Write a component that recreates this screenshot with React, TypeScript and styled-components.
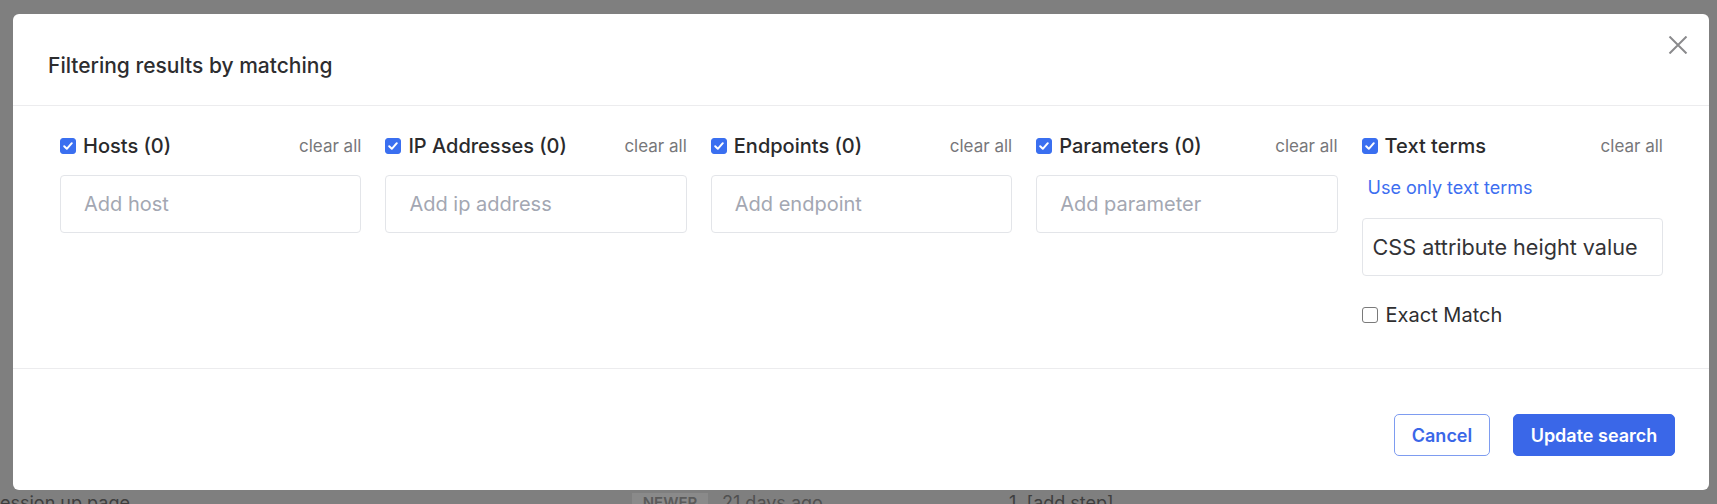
import React from "react";
import styled, { createGlobalStyle } from "styled-components";

const GlobalStyle = createGlobalStyle`
  html, body {
    margin: 0;
    padding: 0;
    background: #7f7f7f;
    font-family: Inter, "Liberation Sans", Arial, sans-serif;
  }
  * { box-sizing: border-box; }
`;

const Backdrop = styled.div`
  width: 1717px;
  height: 504px;
  background: #7f7f7f;
  padding: 14px 8px 0 13px;
  overflow: hidden;
`;

const Modal = styled.div`
  position: relative;
  width: 1696px;
  height: 476px;
  background: #ffffff;
  border-radius: 6px;
  display: flex;
  flex-direction: column;
`;

const Header = styled.div`
  padding: 41px 47px 28px 35px;
  border-bottom: 1px solid #ececee;
`;

const Title = styled.h2`
  margin: 0;
  font-size: 21px;
  line-height: 22px;
  font-weight: 500;
  color: #2d2d2f;
`;

const CloseButton = styled.button`
  position: absolute;
  top: 22px;
  right: 21px;
  width: 20px;
  height: 18px;
  padding: 0;
  border: none;
  background: transparent;
  display: flex;
  align-items: center;
  justify-content: center;
`;

const Body = styled.div`
  display: grid;
  grid-template-columns: repeat(5, 1fr);
  column-gap: 24px;
  padding: 29px 46px 42px 47px;
  border-bottom: 1px solid #ececee;
`;

const Column = styled.div`
  display: flex;
  flex-direction: column;
`;

const ColumnHead = styled.div`
  display: flex;
  align-items: center;
  justify-content: space-between;
  height: 22px;
`;

const CheckLabel = styled.label`
  display: flex;
  align-items: center;
  gap: 7px;
  font-size: 20px;
  line-height: 22px;
  font-weight: 500;
  color: #2a2a2c;
`;

const Box = styled.span<{ $checked?: boolean }>`
  width: 16px;
  height: 16px;
  border-radius: 3px;
  flex: none;
  display: flex;
  align-items: center;
  justify-content: center;
  background: ${(p) => (p.$checked ? "#3a6ff0" : "#ffffff")};
  border: 1px solid ${(p) => (p.$checked ? "#3a6ff0" : "#7a7a7a")};
`;

const ClearAll = styled.span`
  font-size: 17px;
  color: #77777a;
`;

const Field = styled.div<{ $top: number; $filled?: boolean }>`
  margin-top: ${(p) => p.$top}px;
  height: 58px;
  border: 1px solid #e3e5e9;
  border-radius: 4px;
  display: flex;
  align-items: center;
  padding: 0 ${(p) => (p.$filled ? "10px" : "23px")};
  font-size: ${(p) => (p.$filled ? "21.6px" : "20px")};
  color: ${(p) => (p.$filled ? "#333336" : "#a3a7b2")};
  white-space: nowrap;
  overflow: hidden;
`;

const LinkText = styled.a`
  margin-top: 22px;
  padding-left: 6px;
  font-size: 18px;
  line-height: 18px;
  color: #3d6ef0;
  text-decoration: none;
`;

const ExactRow = styled.label`
  margin-top: 28px;
  display: flex;
  align-items: center;
  gap: 8px;
  font-size: 20px;
  line-height: 22px;
  color: #2f2f31;
`;

const Footer = styled.div`
  flex: 1;
  display: flex;
  justify-content: flex-end;
  align-items: flex-start;
  gap: 23px;
  padding: 45px 34px 0 0;
`;

const Button = styled.button<{ $primary?: boolean }>`
  height: 42px;
  padding: 0 16px;
  min-width: ${(p) => (p.$primary ? "162px" : "96px")};
  border-radius: 5px;
  font-family: inherit;
  font-size: 18px;
  font-weight: 600;
  border: 1.5px solid ${(p) => (p.$primary ? "#3a67e8" : "#7e9cf0")};
  background: ${(p) => (p.$primary ? "#3a67e8" : "#ffffff")};
  color: ${(p) => (p.$primary ? "#ffffff" : "#3a67e8")};
`;

const BehindStrip = styled.div`
  display: flex;
  align-items: flex-start;
  height: 20px;
  margin: 3px 0 0 -13px;
  font-size: 18px;
  line-height: 20px;
  color: #3e3e3e;
  white-space: nowrap;
`;

const BehindText = styled.span<{ $width: number; $tone?: string }>`
  width: ${(p) => p.$width}px;
  flex: none;
  overflow: hidden;
  color: ${(p) => p.$tone || "#3e3e3e"};
`;

const BehindBadge = styled.span`
  width: 76px;
  flex: none;
  text-align: center;
  background: #8a8a8a;
  color: #5a5a5a;
  font-size: 15px;
  font-weight: 600;
  margin-right: 14px;
`;

const Check = () => (
  <svg width="12" height="12" viewBox="0 0 12 12">
    <path d="M2.2 6.3 L4.8 8.8 L9.8 3.2" fill="none" stroke="#fff" strokeWidth="2" strokeLinecap="round" strokeLinejoin="round" />
  </svg>
);

const columns = [
  { label: "Hosts (0)", placeholder: "Add host" },
  { label: "IP Addresses (0)", placeholder: "Add ip address" },
  { label: "Endpoints (0)", placeholder: "Add endpoint" },
  { label: "Parameters (0)", placeholder: "Add parameter" },
];

export default function App() {
  return (
    <>
      <GlobalStyle />
      <Backdrop>
        <Modal>
          <Header>
            <Title>Filtering results by matching</Title>
          </Header>
          <CloseButton aria-label="Close">
            <svg width="20" height="18" viewBox="0 0 20 18">
              <path d="M1.5 0.5 L18.5 17.5 M18.5 0.5 L1.5 17.5" stroke="#8a8a8c" strokeWidth="2" fill="none" />
            </svg>
          </CloseButton>
          <Body>
            {columns.map((c) => (
              <Column key={c.label}>
                <ColumnHead>
                  <CheckLabel>
                    <Box $checked>
                      <Check />
                    </Box>
                    {c.label}
                  </CheckLabel>
                  <ClearAll>clear all</ClearAll>
                </ColumnHead>
                <Field $top={18}>{c.placeholder}</Field>
              </Column>
            ))}
            <Column>
              <ColumnHead>
                <CheckLabel>
                  <Box $checked>
                    <Check />
                  </Box>
                  Text terms
                </CheckLabel>
                <ClearAll>clear all</ClearAll>
              </ColumnHead>
              <LinkText href="#">Use only text terms</LinkText>
              <Field $top={21} $filled>
                CSS attribute height value
              </Field>
              <ExactRow>
                <Box />
                Exact Match
              </ExactRow>
            </Column>
          </Body>
          <Footer>
            <Button>Cancel</Button>
            <Button $primary>Update search</Button>
          </Footer>
        </Modal>
        <BehindStrip>
          <BehindText $width={632}>ession up page</BehindText>
          <BehindBadge>NEWER</BehindBadge>
          <BehindText $width={287} $tone="#505050">21 days ago</BehindText>
          <BehindText $width={200}>1. [add step]</BehindText>
        </BehindStrip>
      </Backdrop>
    </>
  );
}
